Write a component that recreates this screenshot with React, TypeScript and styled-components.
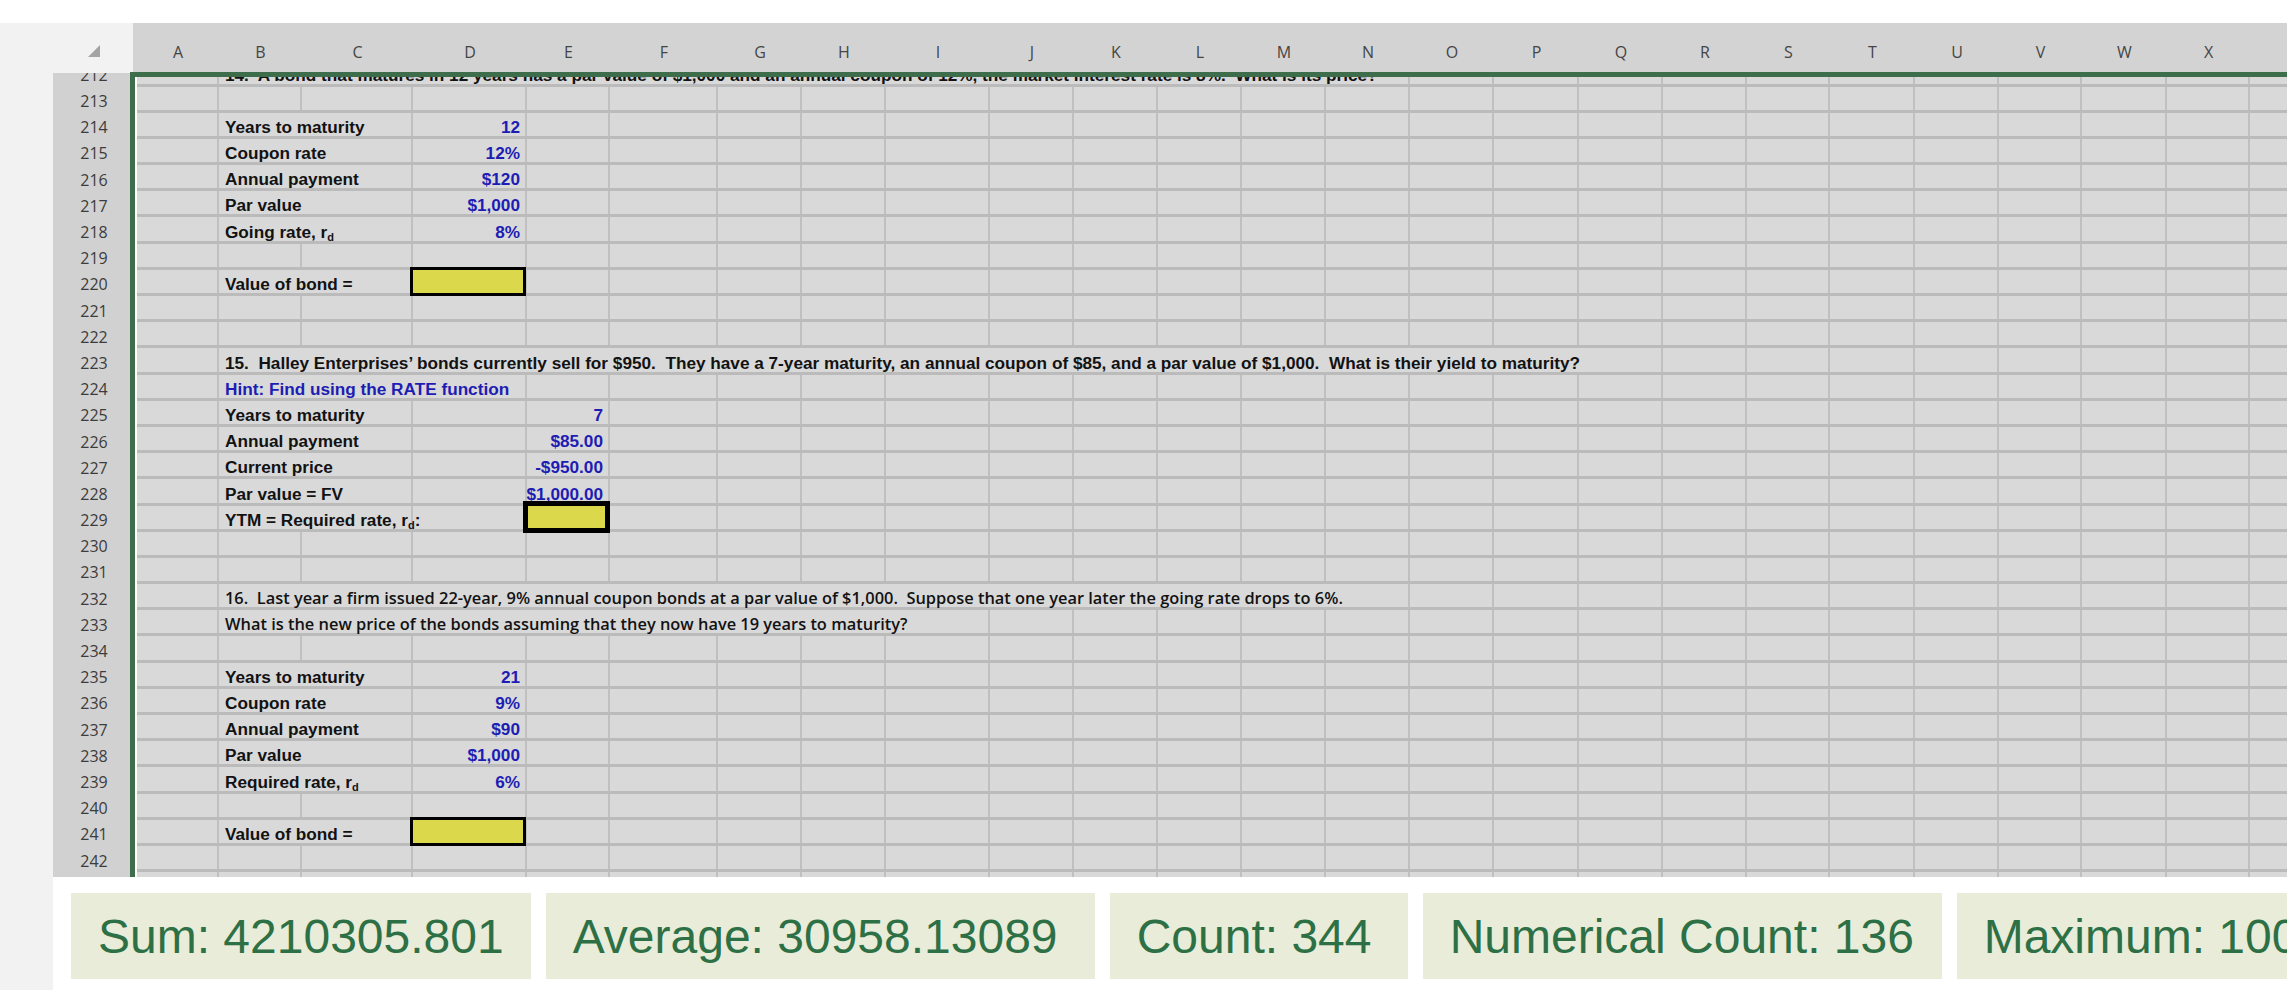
import React from 'react';
import styled, { createGlobalStyle, css } from 'styled-components';

const GlobalStyle = createGlobalStyle`
  html, body {
    margin: 0;
    padding: 0;
    background: #ffffff;
  }
  body {
    width: 2287px;
    height: 990px;
    overflow: hidden;
    font-family: "Liberation Sans", Arial, sans-serif;
  }
`;

const ROW_H = 26.2;
const FIRST_ROW = 212;
const LAST_ROW = 243;

const COLUMNS: [string, number][] = [
  ['A', 82], ['B', 83], ['C', 111], ['D', 114], ['E', 83], ['F', 108],
  ['G', 84], ['H', 84], ['I', 104], ['J', 84], ['K', 84], ['L', 84],
  ['M', 84], ['N', 84], ['O', 84], ['P', 85], ['Q', 84], ['R', 84],
  ['S', 83], ['T', 85], ['U', 84], ['V', 83], ['W', 85], ['X', 83],
  ['Y', 84], ['Z', 84],
];

type Tone = 'ink' | 'blue';
type Face = 'arial' | 'humanist';

type CellSpec = {
  col: string;
  span?: number;
  text?: React.ReactNode;
  align?: 'left' | 'right';
  tone?: Tone;
  face?: Face;
  fill?: boolean;
  frame?: number;
};

const Sub = styled.sub`
  font-size: 11px;
  vertical-align: -3px;
  line-height: 0;
`;

const label = (col: string, text: React.ReactNode): CellSpec => ({ col, span: 2, text });
const value = (col: string, text: string): CellSpec => ({ col, text, align: 'right', tone: 'blue' });
const answer = (col: string, frame: number): CellSpec => ({ col, fill: true, frame });

const SHEET: Record<number, CellSpec[]> = {
  212: [{ col: 'B', span: 13, text: '14.  A bond that matures in 12 years has a par value of $1,000 and an annual coupon of 12%, the market interest rate is 8%.  What is its price?' }],
  214: [label('B', 'Years to maturity'), value('D', '12')],
  215: [label('B', 'Coupon rate'), value('D', '12%')],
  216: [label('B', 'Annual payment'), value('D', '$120')],
  217: [label('B', 'Par value'), value('D', '$1,000')],
  218: [label('B', <>Going rate, r<Sub>d</Sub></>), value('D', '8%')],
  220: [label('B', 'Value of bond ='), answer('D', 3.4)],
  223: [{ col: 'B', span: 16, text: '15.  Halley Enterprises’ bonds currently sell for $950.  They have a 7-year maturity, an annual coupon of $85, and a par value of $1,000.  What is their yield to maturity?' }],
  224: [{ col: 'B', span: 3, text: 'Hint: Find using the RATE function', tone: 'blue' }],
  225: [label('B', 'Years to maturity'), value('E', '7')],
  226: [label('B', 'Annual payment'), value('E', '$85.00')],
  227: [label('B', 'Current price'), value('E', '-$950.00')],
  228: [label('B', 'Par value = FV'), value('E', '$1,000.00')],
  229: [label('B', <>YTM = Required rate, r<Sub>d</Sub>:</>), answer('E', 5.7)],
  232: [{ col: 'B', span: 13, face: 'humanist', text: '16.  Last year a firm issued 22-year, 9% annual coupon bonds at a par value of $1,000.  Suppose that one year later the going rate drops to 6%.' }],
  233: [{ col: 'B', span: 8, face: 'humanist', text: 'What is the new price of the bonds assuming that they now have 19 years to maturity?' }],
  235: [label('B', 'Years to maturity'), value('D', '21')],
  236: [label('B', 'Coupon rate'), value('D', '9%')],
  237: [label('B', 'Annual payment'), value('D', '$90')],
  238: [label('B', 'Par value'), value('D', '$1,000')],
  239: [label('B', <>Required rate, r<Sub>d</Sub></>), value('D', '6%')],
  241: [label('B', 'Value of bond ='), answer('D', 3.4)],
};

const STATUS: { text: string; width?: number }[] = [
  { text: 'Sum: 4210305.801', width: 459 },
  { text: 'Average: 30958.13089', width: 549 },
  { text: 'Count: 344', width: 298 },
  { text: 'Numerical Count: 136', width: 519 },
  { text: 'Maximum: 1000000' },
];

const Page = styled.div`
  display: flex;
  flex-direction: column;
  width: 2287px;
  height: 990px;
  overflow: hidden;
`;

const TopStrip = styled.div`
  flex: 0 0 23px;
  background: #ffffff;
`;

const Main = styled.div`
  flex: 1;
  display: flex;
  min-height: 0;
`;

const LeftGutter = styled.div`
  flex: 0 0 53px;
  background: #f2f2f2;
`;

const Workspace = styled.div`
  flex: 1;
  min-width: 0;
  min-height: 0;
  display: flex;
  flex-direction: column;
`;

const HeaderRow = styled.div`
  flex: 0 0 49px;
  min-height: 0;
  display: flex;
  background: #d3d3d3;
  overflow: hidden;
`;

const Corner = styled.div`
  flex: 0 0 80px;
  box-sizing: border-box;
  display: flex;
  align-items: flex-end;
  justify-content: flex-end;
  padding: 0 33px 15px 0;
  background: #f2f2f2;
`;

const ColumnLabels = styled.div`
  display: flex;
  padding-left: 4px;
`;

const ColumnLabel = styled.div<{ $w: number }>`
  flex: 0 0 ${p => p.$w}px;
  box-sizing: border-box;
  display: flex;
  align-items: center;
  justify-content: center;
  padding-top: 9px;
  font: 400 16px "Open Sans", "DejaVu Sans", sans-serif;
  color: #454545;
`;

const BodyRow = styled.div`
  flex: 0 0 805px;
  min-height: 0;
  display: flex;
  background: #f2f2f2;
  overflow: hidden;
`;

const RowHeader = styled.div`
  flex: 0 0 77px;
  margin-top: 1px;
  background: #d1d1d1;
  overflow: hidden;
`;

const RowNumbers = styled.div`
  margin-top: ${60.3 - 73}px;
`;

const RowNumber = styled.div`
  height: ${ROW_H}px;
  box-sizing: border-box;
  display: flex;
  align-items: center;
  justify-content: center;
  padding: 3px 0 0 5px;
  font: 400 16px "Open Sans", "DejaVu Sans", sans-serif;
  color: #3c3c3c;
`;

const CellViewport = styled.div`
  flex: 1;
  min-width: 0;
  overflow: hidden;
  border-top: 5px solid #3e6d4b;
  border-left: 5px solid #3e6d4b;
  padding-left: 2px;
  background: #ffffff;
`;

const Rows = styled.div`
  margin-top: ${60.3 - 77}px;
  background: #d9d9d9;
`;

const SheetRow = styled.div`
  display: flex;
  height: ${ROW_H}px;
  box-sizing: border-box;
  border-bottom: 3px solid #bbbbbb;
`;

const frame = (t: number) => css`
  &::after {
    content: '';
    position: absolute;
    z-index: 2;
    top: ${-(1.5 + t / 2)}px;
    bottom: ${-(1.5 + t / 2)}px;
    left: ${-(1 + t / 2)}px;
    right: ${1 - t / 2}px;
    border: ${t}px solid #000000;
    pointer-events: none;
  }
`;

const Cell = styled.div<{
  $w: number;
  $align?: 'left' | 'right';
  $tone?: Tone;
  $face?: Face;
  $fill?: boolean;
  $frame?: number;
}>`
  position: relative;
  flex: 0 0 ${p => p.$w}px;
  width: ${p => p.$w}px;
  min-width: 0;
  box-sizing: border-box;
  display: flex;
  align-items: flex-end;
  justify-content: ${p => (p.$align === 'right' ? 'flex-end' : 'flex-start')};
  padding: 0 5px 0 6px;
  border-right: 2px solid #c0c0c0;
  color: ${p => (p.$tone === 'blue' ? '#1d1db4' : '#121212')};
  background: ${p => (p.$fill ? '#dbd94b' : 'transparent')};
  ${p =>
    p.$face === 'humanist'
      ? css`
          font: 600 16.4px/18px "Open Sans", "Noto Sans", sans-serif;
        `
      : css`
          font: 700 17.2px/18px "Liberation Sans", Arial, sans-serif;
        `}
  ${p => (p.$frame ? frame(p.$frame) : '')}
`;

const CellText = styled.span`
  flex: 0 0 auto;
  white-space: pre;
`;

const StatusBar = styled.div`
  flex: 0 0 113px;
  box-sizing: border-box;
  display: flex;
  gap: 15px;
  padding: 16px 0 0 18px;
  background: #ffffff;
  overflow: hidden;
`;

const StatusItem = styled.div<{ $w?: number }>`
  flex: 0 0 ${p => (p.$w ? `${p.$w}px` : 'auto')};
  box-sizing: border-box;
  height: 86px;
  display: flex;
  align-items: center;
  padding: 0 27px;
  background: #e8ecd8;
  color: #2e7046;
  font: 400 48px "Liberation Sans", Arial, sans-serif;
  white-space: nowrap;
`;

const SelectAll = () => (
  <svg width="12" height="12" viewBox="0 0 12 12">
    <polygon points="12,0 12,12 0,12" fill="#a3a3a3" />
  </svg>
);

const widthOf = (start: number, span: number) =>
  COLUMNS.slice(start, start + span).reduce((sum, [, w]) => sum + w, 0);

const GridRow = ({ row }: { row: number }) => {
  const specs = SHEET[row] ?? [];
  const cells: React.ReactNode[] = [];
  let i = 0;
  while (i < COLUMNS.length) {
    const [name] = COLUMNS[i];
    const spec = specs.find(s => s.col === name);
    const span = spec?.span ?? 1;
    cells.push(
      <Cell
        key={name}
        $w={widthOf(i, span)}
        $align={spec?.align}
        $tone={spec?.tone}
        $face={spec?.face}
        $fill={spec?.fill}
        $frame={spec?.frame}
      >
        {spec?.text && <CellText>{spec.text}</CellText>}
      </Cell>
    );
    i += span;
  }
  return <SheetRow>{cells}</SheetRow>;
};

const App = () => {
  const rows: number[] = [];
  for (let r = FIRST_ROW; r <= LAST_ROW; r++) rows.push(r);

  return (
    <>
      <GlobalStyle />
      <Page>
        <TopStrip />
        <Main>
          <LeftGutter />
          <Workspace>
            <HeaderRow>
              <Corner>
                <SelectAll />
              </Corner>
              <ColumnLabels>
                {COLUMNS.map(([name, w]) => (
                  <ColumnLabel key={name} $w={w}>
                    {name}
                  </ColumnLabel>
                ))}
              </ColumnLabels>
            </HeaderRow>
            <BodyRow>
              <RowHeader>
                <RowNumbers>
                  {rows.map(r => (
                    <RowNumber key={r}>{r}</RowNumber>
                  ))}
                </RowNumbers>
              </RowHeader>
              <CellViewport>
                <Rows>
                  {rows.map(r => (
                    <GridRow key={r} row={r} />
                  ))}
                </Rows>
              </CellViewport>
            </BodyRow>
            <StatusBar>
              {STATUS.map(s => (
                <StatusItem key={s.text} $w={s.width}>
                  {s.text}
                </StatusItem>
              ))}
            </StatusBar>
          </Workspace>
        </Main>
      </Page>
    </>
  );
};

export default App;
